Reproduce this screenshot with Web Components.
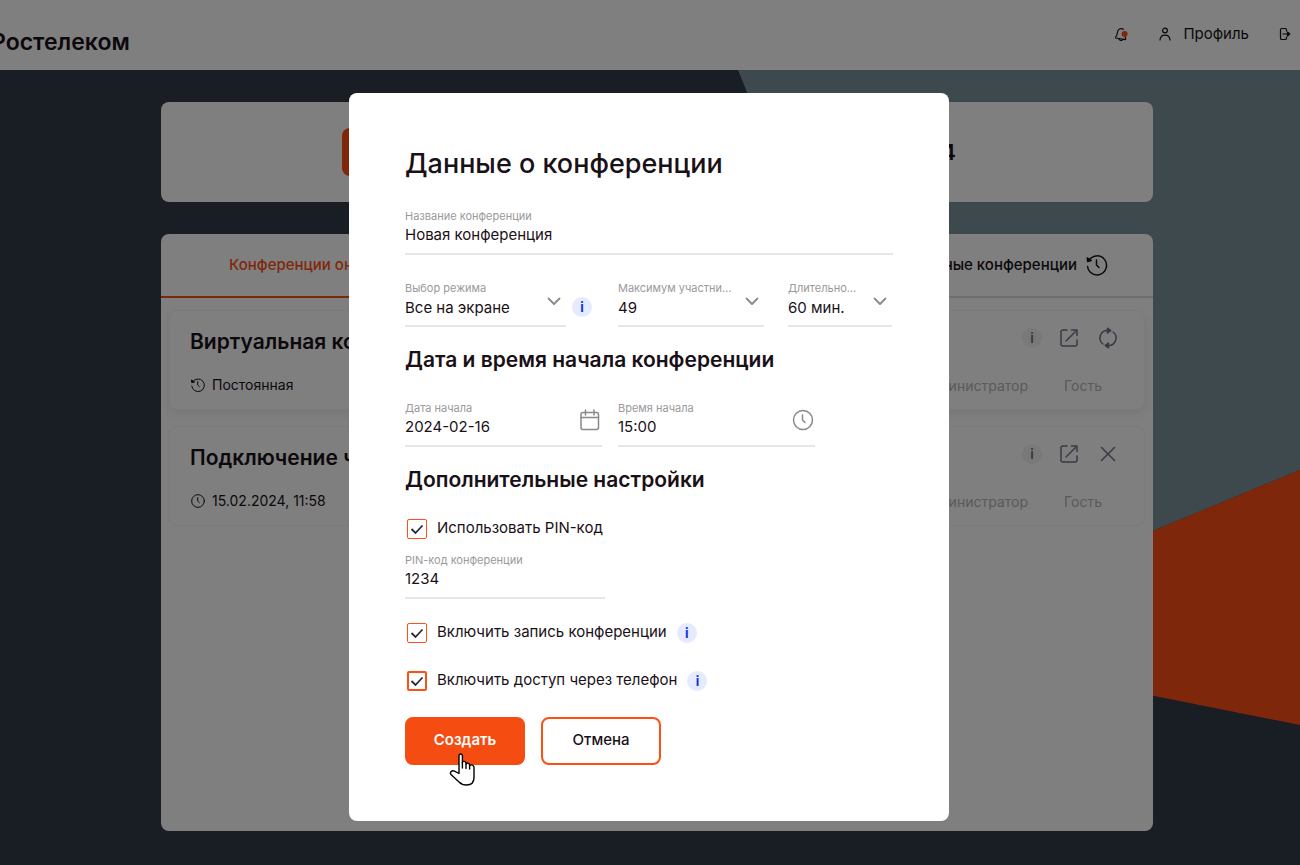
<!DOCTYPE html>
<html lang="ru">
<head>
<meta charset="utf-8">
<meta name="viewport" content="width=device-width, initial-scale=1">
<title>Данные о конференции</title>
<style>
  html, body { height: 100%; margin: 0; }
  body {
    --accent: #ff4f12;
    --ink: #1a1118;
    --muted: #9c989c;
    --line: #e6e6e6;
    color: var(--ink);
    font-family: Inter, "Open Sans", sans-serif;
    font-size: 15px;
    line-height: 20px;
    overflow: hidden;
  }
</style>
</head>
<body>
<conf-app></conf-app>

<script>
const ICONS = {
  bell: '<path d="M10.500 3.200C7.500 1.600 4.800 3.400 4.500 6.200C4.300 8.800 3.800 9.800 2.500 11.300L2.800 12 12.300 13.600 12.700 12.900 12 10.500M5.800 12.700C6.200 14.800 9.200 15.200 9.700 13.400"/><circle cx="11.600" cy="8" r="3" fill="#ff4f12" stroke="none"/>',
  person: '<circle cx="8" cy="4.500" r="2.400"/><path d="M3 14C3.300 10.800 5.200 9.200 8 9.200S12.700 10.800 13 14"/>',
  logout: '<path d="M9.500 5V3.800Q9.500 2.500 8.200 2.500H4.800Q3.500 2.500 3.500 3.800V12.200Q3.500 13.500 4.800 13.500H8.200Q9.500 13.500 9.500 12.200V11M6 8H12"/><path d="M10.500 6 12.800 8 10.500 10Z" fill="currentColor"/>',
  history: '<path d="M4.200 7A9.500 9.500 0 1 1 2.600 13.500M11.500 7V12L14 14.500"/><path d="M2.200 5 2.700 8.600 6.200 7.600Z" fill="currentColor"/>',
  clock: '<circle cx="12" cy="12" r="9.500"/><path d="M11.500 7V12L14 14.500"/>',
  calendar: '<rect x="3" y="4.500" width="17.500" height="17" rx="2"/><path d="M3 9.500H20.500M7.500 2V7M16 2V7"/>',
  chevron: '<path d="M6.500 9.500 12 15 17.500 9.500"/>',
  open: '<path d="M10 4H6Q4 4 4 6V18Q4 20 6 20H18Q20 20 20 18V14M9 15 18.500 5.500"/><path d="M14.500 4H20V9.500"/>',
  refresh: '<path d="M12 4.500A7.500 7.500 0 0 0 7 18M12 19.500A7.500 7.500 0 0 0 17 6"/><path d="M11.500 2.200 14.800 4.600 11.500 7ZM12.500 17 9.200 19.400 12.500 21.800Z" fill="currentColor"/>',
  close: '<path d="M5.500 5.500 18.500 18.500M18.500 5.500 5.500 18.500"/>',
  hand: '<path fill="#fff" d="M10 19V2.800Q10 1 11.700 1T13.400 2.800V9.500Q13.600 8.200 15.200 8.400T17 10.200V11Q17.200 9.900 18.800 10.100T20.600 12V12.700Q20.900 11.800 22.600 11.900T25 14V24.500Q25 32 17.500 32Q13 32 10 29L2 21.500Q.8 19.800 2.200 18.500T5.500 18.200L10 20.500Z"/><path fill="none" d="M13.400 9.500V15M17 11V15.500M20.600 12.700V16"/>'
};

function define(name, css, render) {
  customElements.define(name, class extends HTMLElement {
    constructor() {
      super();
      this.attachShadow({ mode: 'open' });
    }
    connectedCallback() {
      const attr = (key, fallback = '') => this.getAttribute(key) ?? fallback;
      const template = document.createElement('template');
      template.innerHTML = `<style>* { box-sizing: border-box; } ${css}</style>${render(attr)}`;
      this.shadowRoot.replaceChildren(template.content.cloneNode(true));
    }
  });
}

define('ui-icon', `
  :host { display: inline-flex; flex: none; }
  svg { display: block; fill: none; stroke: currentColor; stroke-linecap: round; stroke-linejoin: round; }
`, a => `<svg aria-hidden="true" width="${a('size', '24')}" height="${a('size', '24')}" viewBox="0 0 ${a('box', '24')} ${a('box', '24')}" stroke-width="${a('weight', '1.5')}">${ICONS[a('name')]}</svg>`);

define('info-dot', `
  :host { display: inline-flex; flex: none; }
  button { width: 20px; height: 20px; padding: 0; border: 0; border-radius: 50%; background: var(--dot-bg, #e5eaff); color: var(--dot-ink, #0a35e0); font: 700 13px/20px Inter, sans-serif; text-align: center; }
`, () => `<button type="button" aria-label="Справка">i</button>`);

define('text-field', `
  :host { display: block; min-width: 0; }
  .field { position: relative; border-bottom: 2px solid var(--line); padding-bottom: 8px; }
  label { display: block; font-size: 11px; line-height: 18px; color: var(--muted); white-space: nowrap; }
  input { display: block; width: 100%; height: 20px; padding: 0; border: 0; outline: 0; background: none; color: inherit; font: inherit; }
  ui-icon { position: absolute; right: 0; top: 9px; color: #8c888c; }
`, a => `<div class="field"><label for="control">${a('label')}</label><input id="control" type="text" value="${a('value')}">${a('icon') ? `<ui-icon name="${a('icon')}"></ui-icon>` : ''}</div>`);

define('select-field', `
  :host { display: block; min-width: 0; }
  .field { position: relative; border-bottom: 2px solid var(--line); padding-bottom: 6px; }
  label { display: block; font-size: 11px; line-height: 18px; color: var(--muted); white-space: nowrap; }
  select { display: block; width: 100%; height: 22px; padding: 0; border: 0; outline: 0; appearance: none; background: none; color: inherit; font: inherit; }
  ui-icon { position: absolute; right: 0; top: 10px; color: #8c888c; pointer-events: none; }
`, a => `<div class="field"><label for="control">${a('label')}</label><select id="control"><option>${a('value')}</option></select><ui-icon name="chevron" weight="1.800"></ui-icon></div>`);

define('check-row', `
  :host { display: flex; align-items: center; gap: 10px; height: 28px; padding-left: 2px; }
  label { display: flex; align-items: center; gap: 10px; }
  span { padding-bottom: 2px; }
  input { flex: none; width: 20px; height: 20px; margin: 0; appearance: none; border: 1px solid var(--accent); border-radius: 2px;
    background: url("data:image/svg+xml,%3Csvg xmlns='http://www.w3.org/2000/svg' viewBox='0 0 20 20' fill='none' stroke='%23232b3a' stroke-width='1.800'%3E%3Cpath d='M4.500 10 8.500 14 15.500 6.500'/%3E%3C/svg%3E") center / 20px 20px no-repeat; }
  :host([strong]) input { border-width: 2px; }
`, () => `<label><input type="checkbox" checked><span><slot></slot></span></label><slot name="info"></slot>`);

define('ui-button', `
  :host { display: block; }
  button { width: 120px; height: 48px; padding: 0 0 2px; border: 2px solid var(--accent); border-radius: 8px; background: #fff; color: inherit; font: inherit; font-weight: 500; }
  :host([primary]) button { border-color: #f54c12; background: #f54c12; color: #fff; font-weight: 600; }
`, () => `<button type="button"><slot></slot></button>`);

define('conf-header', `
  :host { display: flex; flex: none; align-items: flex-start; justify-content: space-between; height: 70px; background: #fff; }
  a { display: flex; align-items: center; gap: 10px; color: inherit; text-decoration: none; }
  .logo { margin: 26px 0 0 -9px; font-size: 23px; line-height: 32px; font-weight: 600; }
  nav { display: flex; align-items: center; gap: 28px; height: 67px; padding-right: 7px; }
`, () => `
  <a class="logo" href="#">Ростелеком</a>
  <nav>
    <a href="#" aria-label="Уведомления"><ui-icon name="bell" size="16" box="16" weight="1.200"></ui-icon></a>
    <a href="#"><ui-icon name="person" size="16" box="16" weight="1.200"></ui-icon><span>Профиль</span></a>
    <a href="#" aria-label="Выход"><ui-icon name="logout" size="16" box="16" weight="1.200"></ui-icon></a>
  </nav>`);

define('conf-card', `
  :host { display: flex; justify-content: space-between; height: 100px; padding: 17px 24px 15px 20px; border: 1px solid #f4f4f4; border-radius: 8px; color: var(--ink);
    --dot-bg: #f2f2f2; --dot-ink: #70768a; }
  :host([raised]) { box-shadow: 0 4px 12px rgba(0, 0, 0, .07); }
  .info, .side { display: flex; flex-direction: column; justify-content: space-between; }
  h3 { margin: 0; font-size: 21px; line-height: 28px; font-weight: 600; }
  .meta { display: flex; align-items: center; gap: 6px; font-size: 14px; line-height: 18px; }
  .actions { display: flex; align-items: center; justify-content: flex-end; gap: 15px; height: 20px; color: #70768a; }
  .roles { display: flex; gap: 36px; padding-right: 18px; font-size: 14px; line-height: 16px; }
  .roles a { color: #b4b4b4; text-decoration: none; }
`, a => `
  <div class="info"><h3>${a('heading')}</h3><div class="meta"><ui-icon name="${a('meta-icon')}" size="16"></ui-icon><span>${a('meta')}</span></div></div>
  <div class="side">
    <div class="actions"><info-dot></info-dot><ui-icon name="open"></ui-icon><ui-icon name="${a('action')}"></ui-icon></div>
    <div class="roles"><a href="#">Администратор</a><a href="#">Гость</a></div>
  </div>`);

define('conf-main', `
  :host { position: relative; display: flex; flex: 1; flex-direction: column; background: #323a48; padding: 32px 0 34px 14px; box-sizing: border-box; }
  .backdrop { position: absolute; inset: 0; width: 100%; height: 100%; }
  .column { position: relative; display: flex; flex: 1; flex-direction: column; gap: 32px; width: 100%; max-width: 992px; margin: 0 auto; }
  .summary { display: flex; align-items: center; justify-content: space-between; height: 100px; padding: 0 197px 0 181px; border-radius: 8px; background: #fff; font-size: 22px; line-height: 28px; font-weight: 600; }
  .summary button { width: 240px; height: 48px; border: 0; border-radius: 8px; background: var(--accent); }
  .panel { flex: 1; border-radius: 8px; background: #fff; }
  .tabs { display: grid; grid-template-columns: 1fr 1fr; height: 64px; }
  .tabs a { display: flex; align-items: center; gap: 8px; border-bottom: 2px solid #dedede; color: inherit; text-decoration: none; font-weight: 500; }
  .tabs a:first-child { padding-left: 68px; border-color: var(--accent); color: var(--accent); }
  .tabs a:last-child { justify-content: flex-end; padding-right: 44px; }
  .list { display: grid; gap: 16px; padding: 12px 8px; }
`, () => `
  <svg class="backdrop" viewBox="0 0 1300 795" preserveAspectRatio="xMaxYMin slice" aria-hidden="true">
    <path fill="#7d929a" d="M738 0H1300V400L957 542Z"/>
    <path fill="#ff4f16" d="M1300 400 957 542 970 589 1300 655Z"/>
  </svg>
  <div class="column">
    <div class="summary"><button type="button" aria-label="Создать конференцию"></button><span>24</span></div>
    <div class="panel">
      <div class="tabs"><a href="#">Конференции онлайн</a><a href="#"><span>Завершенные конференции</span><ui-icon name="history"></ui-icon></a></div>
      <div class="list">
        <conf-card raised heading="Виртуальная комната" meta="Постоянная" meta-icon="history" action="refresh"></conf-card>
        <conf-card heading="Подключение через" meta="15.02.2024, 11:58" meta-icon="clock" action="close"></conf-card>
      </div>
    </div>
  </div>`);

define('conf-dialog', `
  :host { position: fixed; inset: 0; display: flex; align-items: flex-start; justify-content: center; padding: 93px 2px 0 0; background: rgba(0, 0, 0, .5); overflow: auto; box-sizing: border-box; }
  form { width: 600px; padding: 56px; border-radius: 8px; background: #fff; }
  h1, h2 { margin: 0; font-weight: 600; }
  h1 { margin-bottom: 28px; font-size: 27px; line-height: 30px; font-weight: 500; }
  h2 { margin: 20px 0 26px; font-size: 21px; line-height: 26px; }
  .row { display: flex; gap: 16px; }
  .row text-field { width: 197px; }
  .modes { margin-top: 24px; }
  .mode { display: flex; align-items: center; gap: 6px; width: 197px; }
  .mode select-field { width: 161px; }
  .mode info-dot { padding-top: 8px; }
  .limits { display: flex; flex: 1; gap: 24px; }
  .limits select-field:first-child { width: 146px; }
  .limits select-field:last-child { width: 104px; }
  .extra { margin-bottom: 22px; }
  .pin { width: 200px; margin-top: 8px; }
  .option { margin-top: 20px; }
  .buttons { margin-top: 22px; }
  .primary { position: relative; }
  .pointer { position: absolute; left: 44px; top: 36px; color: #000; pointer-events: none; }
`, () => `
  <form role="dialog" aria-modal="true" aria-labelledby="title">
    <h1 id="title">Данные о конференции</h1>
    <text-field label="Название конференции" value="Новая конференция"></text-field>
    <div class="row modes">
      <div class="mode"><select-field label="Выбор режима" value="Все на экране"></select-field><info-dot></info-dot></div>
      <div class="limits"><select-field label="Максимум участни…" value="49"></select-field><select-field label="Длительно…" value="60 мин."></select-field></div>
    </div>
    <h2>Дата и время начала конференции</h2>
    <div class="row">
      <text-field label="Дата начала" value="2024-02-16" icon="calendar"></text-field>
      <text-field label="Время начала" value="15:00" icon="clock"></text-field>
    </div>
    <h2 class="extra">Дополнительные настройки</h2>
    <check-row>Использовать PIN-код</check-row>
    <text-field class="pin" label="PIN-код конференции" value="1234"></text-field>
    <check-row class="option">Включить запись конференции<info-dot slot="info"></info-dot></check-row>
    <check-row class="option" strong>Включить доступ через телефон<info-dot slot="info"></info-dot></check-row>
    <div class="row buttons">
      <div class="primary"><ui-button primary>Создать</ui-button><ui-icon class="pointer" name="hand" size="34" box="34" weight="1.400"></ui-icon></div>
      <ui-button>Отмена</ui-button>
    </div>
  </form>`);

define('conf-app', `
  :host { display: flex; flex-direction: column; min-height: 100%; }
`, () => `<conf-header></conf-header><conf-main></conf-main><conf-dialog></conf-dialog>`);
</script>
</body>
</html>
